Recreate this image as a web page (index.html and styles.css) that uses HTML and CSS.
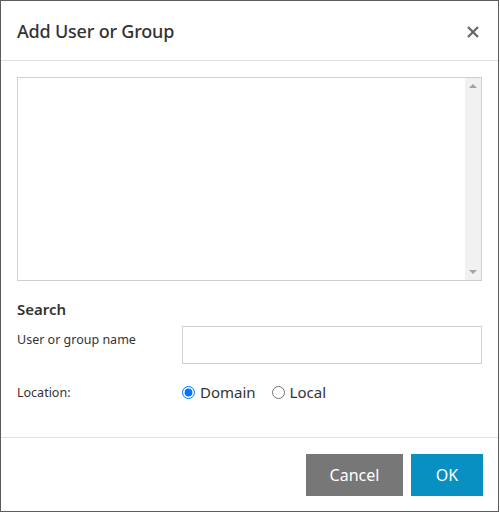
FILE: index.html
```html
<!DOCTYPE html>
<html>
<head>
<meta charset="utf-8">
<link rel="stylesheet" href="styles.css">
</head>
<body>
<div class="dialog">
  <div class="header">
    <h1 class="title">Add User or Group</h1>
    <svg class="close" width="12" height="12" viewBox="0 0 12 12"><path d="M1 1L11 11M11 1L1 11" stroke="#666" stroke-width="2.2" fill="none"/></svg>
  </div>
  <div class="body">
    <div class="listbox">
      <div class="list-area"></div>
      <div class="scrollbar">
        <span class="arrow up"></span>
        <span class="arrow down"></span>
      </div>
    </div>
    <h2 class="section">Search</h2>
    <div class="row name-row">
      <label class="label">User or group name</label>
      <input class="text-input" type="text">
    </div>
    <div class="row loc-row">
      <span class="label">Location:</span>
      <div class="radios">
        <label class="radio"><input type="radio" name="loc" checked> Domain</label>
        <label class="radio"><input type="radio" name="loc"> Local</label>
      </div>
    </div>
  </div>
  <div class="footer">
    <button class="btn cancel">Cancel</button>
    <button class="btn ok">OK</button>
  </div>
</div>
</body>
</html>
```
FILE: styles.css
```css
html, body { margin: 0; padding: 0; background: #fff; }
body { font-family: "Noto Sans", "Open Sans", sans-serif; color: #333; }
.dialog {
  width: 497px; height: 510px;
  border: 1px solid #5c5c5c;
  background: #fff;
  display: flex; flex-direction: column;
}
.header {
  height: 59px; border-bottom: 1px solid #e0e0e0;
  display: flex; align-items: center; justify-content: space-between;
  padding: 0 19px 0 16px;
}
.title { margin: 0; font-size: 18px; font-weight: 500; color: #333; letter-spacing: -0.2px; }
.close { margin-top: 2px; }
.body { flex: 1; padding: 16px 16px 0 16px; }
.listbox {
  height: 202px; border: 1px solid #cfcfcf; display: flex;
}
.list-area { flex: 1; }
.scrollbar {
  width: 16px; background: #f1f1f1; position: relative;
}
.arrow { position: absolute; left: 4px; width: 0; height: 0; border-left: 4px solid transparent; border-right: 4px solid transparent; }
.arrow.up { top: 6px; border-bottom: 4px solid #a3a3a3; }
.arrow.down { bottom: 6px; border-top: 4px solid #a3a3a3; }
.section { margin: 18px 0 0; font-size: 15px; font-weight: 600; color: #333; line-height: 20px; }
.row { display: flex; }
.label { width: 165px; font-size: 12.5px; color: #333; }
.name-row { margin-top: 7px; }
.name-row .label { padding-top: 5px; }
.text-input {
  width: 300px; box-sizing: border-box; height: 38px;
  border: 1px solid #cfcfcf; margin: 0; padding: 0 8px;
}
.loc-row { margin-top: 18px; align-items: center; }
.radios { display: flex; gap: 16px; }
.radio { display: flex; align-items: center; font-size: 15px; color: #333; gap: 5px; }
.radio input { margin: 0; width: 13px; height: 13px; }
.footer {
  height: 74px; border-top: 1px solid #e0e0e0;
  display: flex; justify-content: flex-end; align-items: flex-start;
  padding: 16px 15px 0 0; box-sizing: border-box; gap: 8px;
}
.btn {
  height: 42px; border: none; color: #fff; font-family: inherit; font-size: 16px; margin: 0;
}
.cancel { width: 97px; background: #777777; }
.ok { width: 72px; background: #0790c1; }
```
